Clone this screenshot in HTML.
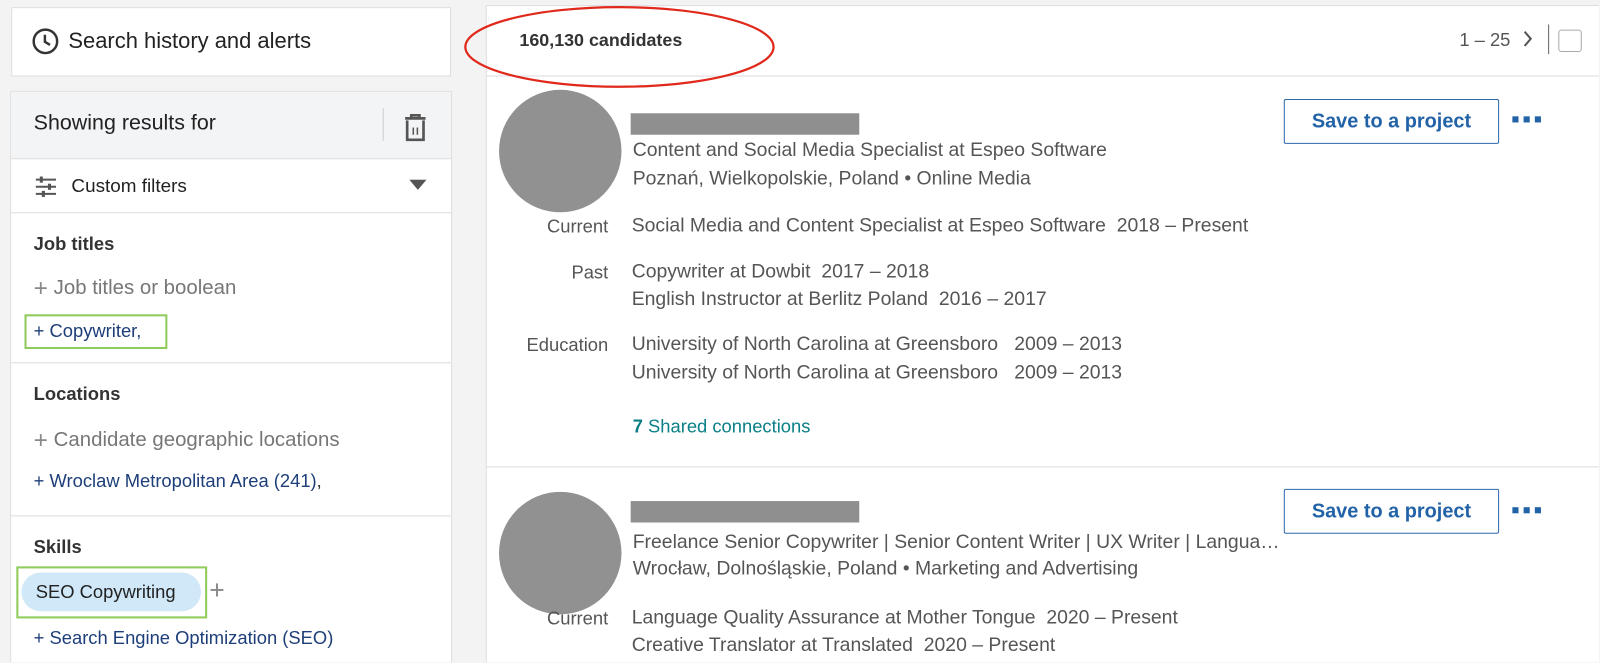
<!DOCTYPE html>
<html><head><meta charset="utf-8"><style>
*{margin:0;padding:0;box-sizing:border-box}
html,body{width:1600px;height:663px;overflow:hidden}
body{background:#f3f3f3;font-family:"Liberation Sans",sans-serif;color:#333}
#clip{position:absolute;left:0;top:0;width:1600px;height:663px;overflow:hidden}
#w{position:absolute;left:0;top:0;width:1567px;height:649px;overflow:hidden;transform:scale(1.0205);transform-origin:0 0}
.t{position:absolute;white-space:nowrap;line-height:24px}
.box{position:absolute;background:#fff;border:1px solid #ddd}
.g{color:#555;font-size:19px}
.lbl{color:#555;font-size:18px;text-align:right;width:120px}
.blue{color:#1d3e79}
.hl{position:absolute;background:#ddd;height:1px}
.av{position:absolute;width:120px;height:120px;border-radius:50%;background:#919191}
.bar{position:absolute;background:#8f8f8f;width:224px;height:21px}
.btn{position:absolute;width:211px;height:44px;border:1px solid #2c67ac;border-radius:2px;color:#2263a8;font-weight:bold;font-size:19.5px;text-align:center;line-height:42px;background:#fff}
.dots{position:absolute;width:28px;height:6px}
.dots i{position:absolute;top:0;width:6px;height:6px;background:#2263a8}
.pl{font-size:24px;color:#888;vertical-align:-2px}
</style></head><body><div id="clip"><div id="w">
<div class="box" style="left:11px;top:7px;width:431px;height:68px"></div>
<svg style="position:absolute;left:31px;top:27px" width="27" height="27" viewBox="0 0 27 27"><circle cx="13.5" cy="13.5" r="11.5" fill="none" stroke="#333" stroke-width="2.4"/><path d="M13 7v7l5 3" fill="none" stroke="#333" stroke-width="2.4"/></svg>
<div class="t" style="left:67px;top:28px;font-size:21.5px;color:#222">Search history and alerts</div>

<div class="box" style="left:10px;top:89px;width:433px;height:600px"></div>
<div style="position:absolute;left:11px;top:90px;width:431px;height:65px;background:#f3f4f6"></div>
<div class="hl" style="left:11px;top:155px;width:431px"></div>
<div class="t" style="left:33px;top:109px;font-size:21px;color:#222">Showing results for</div>
<div style="position:absolute;left:375px;top:106px;width:1px;height:32px;background:#ccc"></div>
<svg style="position:absolute;left:394px;top:110px" width="26" height="30" viewBox="0 0 26 30"><path d="M3 6h20M9 6V3h8v3M5 8v19h16V8" fill="none" stroke="#555" stroke-width="2.6"/><path d="M11 15v7M15 15v7" stroke="#555" stroke-width="1.5"/></svg>
<svg style="position:absolute;left:35px;top:173px" width="20" height="20" viewBox="0 0 20 20"><path d="M0 3h20M0 10h20M0 17h20" stroke="#555" stroke-width="2"/><rect x="4" y="0" width="3" height="6" fill="#555"/><rect x="12" y="7" width="3" height="6" fill="#555"/><rect x="6" y="14" width="3" height="6" fill="#555"/></svg>
<div class="t" style="left:70px;top:170px;font-size:18.5px;color:#222">Custom filters</div>
<svg style="position:absolute;left:401px;top:176px" width="17" height="10"><path d="M0 0h17L8.5 10z" fill="#555"/></svg>
<div class="hl" style="left:11px;top:208px;width:431px"></div>

<div class="t" style="left:33px;top:227px;font-size:18px;font-weight:bold;color:#333">Job titles</div>
<div class="t" style="left:33px;top:270px;font-size:20px;color:#777"><span class="pl">+</span> Job titles or boolean</div>
<div style="position:absolute;left:24px;top:308px;width:140px;height:34px;border:2px solid #8fcb5a"></div>
<div class="t blue" style="left:33px;top:312px;font-size:18px">+ Copywriter,</div>
<div class="hl" style="left:11px;top:355px;width:431px"></div>

<div class="t" style="left:33px;top:374px;font-size:18px;font-weight:bold;color:#333">Locations</div>
<div class="t" style="left:33px;top:419px;font-size:20px;color:#777"><span class="pl">+</span> Candidate geographic locations</div>
<div class="t blue" style="left:33px;top:459px;font-size:18px">+ Wroclaw Metropolitan Area (241)<span style="color:#333">,</span></div>
<div class="hl" style="left:11px;top:505px;width:431px"></div>

<div class="t" style="left:33px;top:524px;font-size:18px;font-weight:bold;color:#333">Skills</div>
<div style="position:absolute;left:16px;top:555px;width:187px;height:51px;border:2px solid #8fcb5a"></div>
<div style="position:absolute;left:21px;top:561px;width:176px;height:38px;border-radius:19px;background:#d0e8f8"></div>
<div class="t" style="left:35px;top:568px;font-size:18px;color:#222">SEO Copywriting</div>
<div class="t" style="left:205px;top:566px;font-size:26px;color:#888">+</div>
<div class="t blue" style="left:33px;top:613px;font-size:18px">+ Search Engine Optimization (SEO)</div>

<div class="box" style="left:476px;top:5px;width:1130px;height:670px"></div>
<div class="hl" style="left:477px;top:74px;width:1123px"></div>
<div class="t" style="left:509px;top:27px;font-size:17.5px;font-weight:bold;color:#333">160,130 candidates</div>
<svg style="position:absolute;left:448px;top:3px" width="318" height="86"><ellipse cx="159" cy="43" rx="151" ry="39" fill="none" stroke="#e0281b" stroke-width="2.2"/></svg>
<div class="t" style="left:1430px;top:27px;font-size:18px;color:#555">1 – 25</div>
<svg style="position:absolute;left:1492px;top:30px" width="10" height="16"><path d="M2 1l6 7-6 7" fill="none" stroke="#555" stroke-width="2"/></svg>
<div style="position:absolute;left:1517px;top:24px;width:1px;height:29px;background:#666"></div>
<div style="position:absolute;left:1527px;top:29px;width:23px;height:22px;border:1px solid #aaa;border-radius:3px;background:#fff"></div>

<div class="av" style="left:489px;top:88px"></div>
<div class="bar" style="left:618px;top:111px"></div>
<div class="t g" style="left:620px;top:136px">Content and Social Media Specialist at Espeo Software</div>
<div class="t g" style="left:620px;top:164px">Poznań, Wielkopolskie, Poland • Online Media</div>
<div class="btn" style="left:1258px;top:97px">Save to a project</div>
<div class="dots" style="left:1482px;top:114px"><i style="left:0"></i><i style="left:11px"></i><i style="left:22px"></i></div>
<div class="t lbl" style="left:476px;top:210px">Current</div>
<div class="t g" style="left:619px;top:210px">Social Media and Content Specialist at Espeo Software&nbsp;&nbsp;2018 – Present</div>
<div class="t lbl" style="left:476px;top:255px">Past</div>
<div class="t g" style="left:619px;top:255px">Copywriter at Dowbit&nbsp;&nbsp;2017 – 2018</div>
<div class="t g" style="left:619px;top:282px">English Instructor at Berlitz Poland&nbsp;&nbsp;2016 – 2017</div>
<div class="t lbl" style="left:476px;top:326px">Education</div>
<div class="t g" style="left:619px;top:326px">University of North Carolina at Greensboro&nbsp;&nbsp;&nbsp;2009 – 2013</div>
<div class="t g" style="left:619px;top:354px">University of North Carolina at Greensboro&nbsp;&nbsp;&nbsp;2009 – 2013</div>
<div class="t" style="left:620px;top:406px;font-size:18px;color:#0b7f87"><b>7</b> Shared connections</div>
<div class="hl" style="left:477px;top:457px;width:1123px"></div>

<div class="av" style="left:489px;top:482px"></div>
<div class="bar" style="left:618px;top:491px"></div>
<div class="t g" style="left:620px;top:520px">Freelance Senior Copywriter | Senior Content Writer | UX Writer | Langua…</div>
<div class="t g" style="left:620px;top:546px">Wrocław, Dolnośląskie, Poland • Marketing and Advertising</div>
<div class="btn" style="left:1258px;top:479px">Save to a project</div>
<div class="dots" style="left:1482px;top:497px"><i style="left:0"></i><i style="left:11px"></i><i style="left:22px"></i></div>
<div class="t lbl" style="left:476px;top:594px">Current</div>
<div class="t g" style="left:619px;top:594px">Language Quality Assurance at Mother Tongue&nbsp;&nbsp;2020 – Present</div>
<div class="t g" style="left:619px;top:621px">Creative Translator at Translated&nbsp;&nbsp;2020 – Present</div>
</div></div></body></html>
